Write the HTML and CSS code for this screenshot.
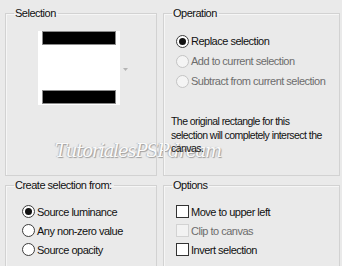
FILE: index.html
```html
<!DOCTYPE html>
<html lang="en">
<head>
    <meta charset="UTF-8">
    <title>Load Selection From Alpha</title>
    <link rel="stylesheet" href="styles.css">
</head>
<body>
    <div class="dialog">
        <fieldset class="group">
            <legend>Selection</legend>
            <div class="preview-row">
                <div class="preview">
                    <div class="bar"></div>
                    <div class="bar"></div>
                </div>
                <svg class="tick" width="5" height="3" viewBox="0 0 5 3"><path d="M0 0h5L2.5 3z" fill="#b4b4b4"/></svg>
            </div>
        </fieldset>

        <fieldset class="group">
            <legend>Operation</legend>
            <div class="choices">
                <div class="choice"><span class="radio checked"></span>Replace selection</div>
                <div class="choice disabled"><span class="radio"></span>Add to current selection</div>
                <div class="choice disabled"><span class="radio"></span>Subtract from current selection</div>
            </div>
            <p class="note">The original rectangle for this<br>selection will completely intersect the<br>canvas.</p>
        </fieldset>

        <fieldset class="group low">
            <legend>Create selection from:</legend>
            <div class="choices wide">
                <div class="choice"><span class="radio checked"></span>Source luminance</div>
                <div class="choice"><span class="radio"></span>Any non-zero value</div>
                <div class="choice"><span class="radio"></span>Source opacity</div>
            </div>
        </fieldset>

        <fieldset class="group low">
            <legend>Options</legend>
            <div class="choices">
                <div class="choice"><span class="check"></span>Move to upper left</div>
                <div class="choice disabled"><span class="check"></span>Clip to canvas</div>
                <div class="choice"><span class="check"></span>Invert selection</div>
            </div>
        </fieldset>
    </div>

    <!-- watermark, sits under the dialog text -->
    <div class="watermark">TutorialesPSPdream</div>
</body>
</html>
```

FILE: styles.css
```css
body {
  margin: 0;
  padding: 6px 0 0 5px;
  background: #eaeaea;
  font-family: "Liberation Sans", Arial, sans-serif;
  font-size: 11px;
  letter-spacing: -0.5px;
  color: #111;
  overflow: hidden;
  position: relative;
}

.dialog {
  display: grid;
  grid-template-columns: 152px 177px;
  grid-template-rows: 170px 100px;
  column-gap: 6px;
  row-gap: 2px;
}

.group {
  margin: 0;
  padding: 0 0 0 7px;
  border: 1px solid #d2d2d2;
  box-shadow: inset 1px 1px 0 #f6f6f6;
  min-width: 0;
}

.group legend {
  margin-left: 1px;
  padding: 0 2px 0 1px;
  line-height: 14px;
}

/* preview */
.preview-row {
  display: flex;
  align-items: center;
  gap: 3px;
  margin: 11px 0 0 25px;
}

.preview {
  width: 82px;
  height: 74px;
  background: #fff;
  display: flex;
  flex-direction: column;
  justify-content: space-between;
  padding: 1px 5px 2px;
  box-sizing: border-box;
}

.bar {
  height: 12px;
  background: #000;
  box-shadow: 0 0 0 1px #8a8a8a;
}

.tick {
  margin-top: 2px;
}

/* radio and check rows */
.choices {
  margin: 11px 0 0 5px;
}

.choice {
  height: 20px;
  display: flex;
  align-items: center;
  gap: 2px;
}

.low .choice {
  height: 19px;
}

.low .choices {
  margin-top: 10px;
}

.choices.wide {
  margin-left: 9px;
}

.disabled {
  color: #6d6d6d;
}

.radio {
  width: 11px;
  height: 11px;
  border: 1px solid #3c3c3c;
  border-radius: 50%;
  background: #fff;
  position: relative;
}

.radio.checked:after {
  content: "";
  position: absolute;
  left: 2px;
  top: 2px;
  width: 7px;
  height: 7px;
  border-radius: 50%;
  background: #111;
}

.disabled .radio {
  border-color: #c4c4c4;
  background: #f4f4f4;
}

.check {
  width: 11px;
  height: 11px;
  border: 1px solid #333;
  background: #fff;
}

.disabled .check {
  border-color: #d2d2d2;
  background: #f2f2f2;
}

.note {
  margin: 24px 0 0;
  font-size: 10.5px;
  letter-spacing: -0.55px;
  line-height: 13.5px;
  white-space: nowrap;
}

.watermark {
  position: absolute;
  z-index: -1;
  left: 55px;
  top: 140px;
  font-family: "DejaVu Serif", serif;
  font-style: italic;
  font-size: 18px;
  letter-spacing: -1.2px;
  color: #fafafa;
  text-shadow: 1px 1px 1px #9c9c9c, -1px 0 1px #bcbcbc;
}
```
